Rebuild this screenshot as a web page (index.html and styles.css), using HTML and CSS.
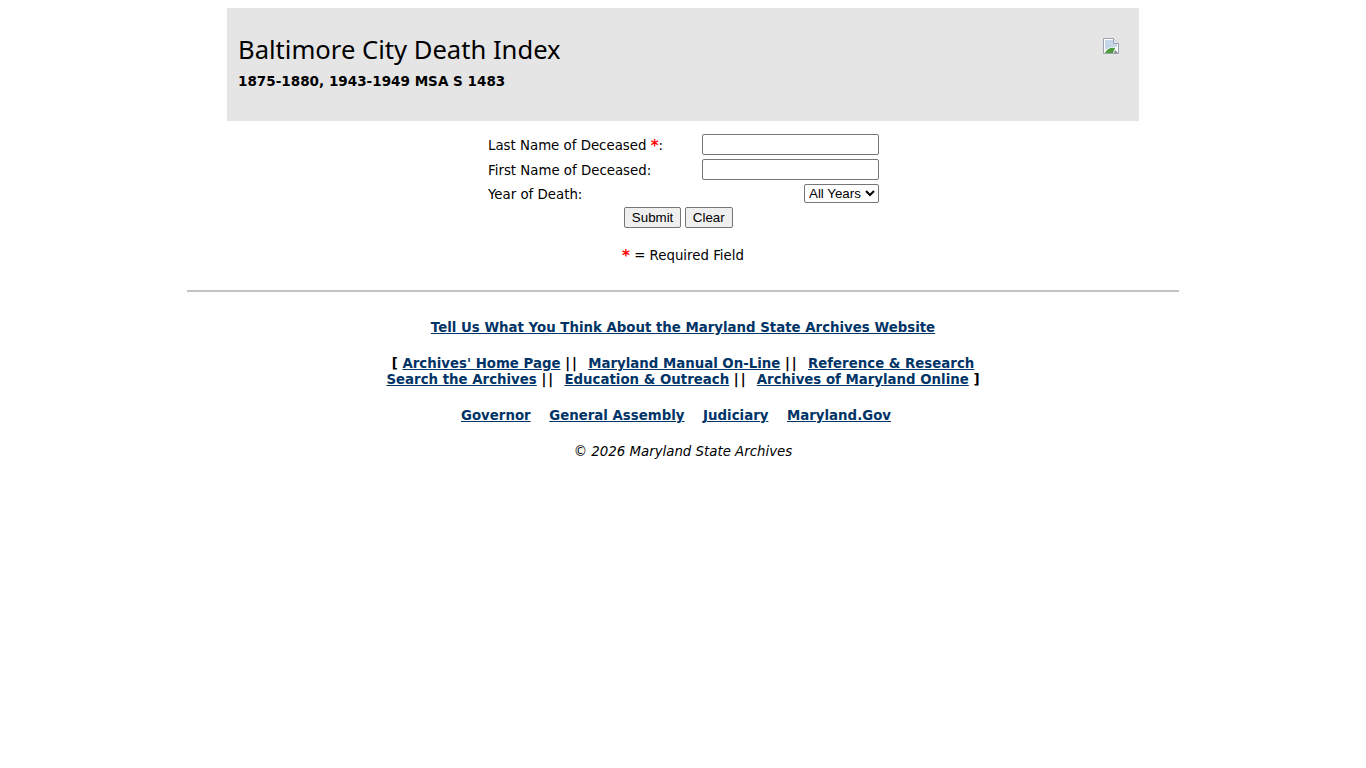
FILE: index.html
```html
<!DOCTYPE html>
<html lang="en">

<head>
    <meta charset="UTF-8">
    <title>Baltimore City Death Index</title>
    <link rel="stylesheet" href="styles.css">
</head>

<body>
    <div class="container">
        <div class="banner">
            <div class="banner-text">
                <h1>Baltimore City Death Index</h1>
                <h2>1875-1880, 1943-1949 MSA S 1483</h2>
            </div>
            <svg class="broken-img" width="16" height="16" viewBox="0 0 16 16">
                <path d="M.5 .5H10.5L15.5 5.5V15.5H.5Z" fill="#fff" stroke="#9aa3ad"/>
                <path d="M10.5 .5V5.5H15.5" fill="#e8eef5" stroke="#9aa3ad"/>
                <path d="M2 2H10V6H14V9L8 9 2 12Z" fill="#c5d5ea"/>
                <path d="M2 15C4 10 9 9 12 10L10 15Z" fill="#4f9a3c"/>
                <path d="M12 12L15 15H11Z" fill="#7f8a94"/>
            </svg>
        </div>

        <form class="search-form" onsubmit="return false">
            <div class="form-row">
                <label for="lastName">Last Name of Deceased <span class="req">*</span>:</label>
                <input type="text" id="lastName">
            </div>
            <div class="form-row">
                <label for="firstName">First Name of Deceased:</label>
                <input type="text" id="firstName">
            </div>
            <div class="form-row year-row">
                <label for="year">Year of Death:</label>
                <select id="year">
                    <option>All Years</option>
                </select>
            </div>
            <div class="form-buttons">
                <button type="submit" class="submit-btn">Submit</button>
                <button type="reset">Clear</button>
            </div>
        </form>

        <p class="required-note"><span class="req">*</span> = Required Field</p>

        <hr>

        <div class="footer">
            <p><a href="#">Tell Us What You Think About the Maryland State Archives Website</a></p>
            <p>
                [ <a href="#">Archives' Home Page</a> <span class="sep">||</span>&nbsp; <a href="#">Maryland Manual On-Line</a> <span class="sep">||</span>&nbsp; <a href="#">Reference &amp; Research</a><br>
                <a href="#">Search the Archives</a> <span class="sep">||</span>&nbsp; <a href="#">Education &amp; Outreach</a> <span class="sep">||</span>&nbsp; <a href="#">Archives of Maryland Online</a> ]
            </p>
            <p class="gov-links">
                <a href="#">Governor</a>
                <a href="#">General Assembly</a>
                <a href="#">Judiciary</a>
                <a href="#">Maryland.Gov</a>
            </p>
            <p class="copyright">© 2026 Maryland State Archives</p>
        </div>
    </div>
</body>

</html>
```

FILE: styles.css
```css
body {
    margin: 8px;
    background-color: #fff;
    color: #000;
    font-family: "DejaVu Sans", Verdana, sans-serif;
    font-size: 13.33px;
}

.container {
    width: 992px;
    margin: 0 auto;
}

.banner {
    width: 912px;
    height: 113px;
    margin: 0 auto;
    background-color: #e5e5e5;
    display: flex;
    justify-content: space-between;
    box-sizing: border-box;
    padding: 26px 20px 0 11px;
}

h1 {
    margin: 0;
    font-family: "Noto Sans", sans-serif;
    font-size: 25.6px;
    font-weight: 400;
    line-height: 32px;
}

h2 {
    margin: 7px 0 0;
    font-size: 13.55px;
    font-weight: 700;
    line-height: 16px;
}

.broken-img {
    margin-top: 4px;
}

.search-form {
    width: 392px;
    margin: 13px auto 0;
}

.form-row {
    display: flex;
    justify-content: space-between;
    align-items: center;
    height: 21px;
    margin-bottom: 4px;
}

.form-row label {
    padding: 2px 0 0 1px;
}

.year-row {
    height: 19px;
}

.form-row input {
    width: 177px;
    height: 21px;
    box-sizing: border-box;
    border: 1px solid #767676;
    border-radius: 2px;
    padding: 1px 2px;
}

.form-row select {
    width: 75px;
    height: 19px;
    font-family: "Liberation Sans", Arial, sans-serif;
    font-size: 13.33px;
    background-color: #fff;
    border: 1px solid #767676;
    border-radius: 2px;
}

.form-buttons {
    display: flex;
    justify-content: center;
    gap: 4px;
    padding-right: 9px;
}

button {
    height: 21px;
    padding: 1px 7px;
    font-family: "Liberation Sans", Arial, sans-serif;
    font-size: 13.33px;
    color: #000;
    background-color: #efefef;
    border: 1px solid #767676;
    border-radius: 2px;
}

.submit-btn {
    padding: 1px 6.5px;
}

.req {
    color: #f00;
    font-size: 15px;
    font-weight: 700;
    line-height: 14px;
    vertical-align: -1px;
}

.required-note {
    margin: 20px 0 0;
    text-align: center;
    line-height: 16px;
}

hr {
    margin: 26px 0 0;
    border: 0;
    border-top: 2px solid #c0c4c4;
}

.footer {
    padding-top: 28px;
    text-align: center;
    font-weight: 700;
    line-height: 16px;
}

.footer p {
    margin: 0 0 20px;
}

.footer a {
    color: #036;
}

.sep {
    letter-spacing: 2px;
}

.gov-links {
    padding-right: 14px;
}

.gov-links a {
    margin: 0 7px;
}

.footer .copyright {
    font-weight: 400;
    font-style: italic;
}
```
